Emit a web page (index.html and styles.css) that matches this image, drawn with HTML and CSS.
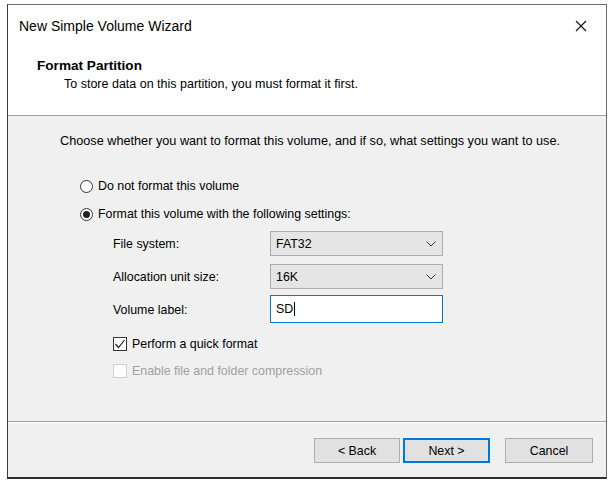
FILE: index.html
```html
<!DOCTYPE html>
<html lang="en">

<head>
  <meta charset="UTF-8">
  <title>New Simple Volume Wizard</title>
  <link rel="stylesheet" href="styles.css">
</head>

<body>
  <div class="window">
    <div class="titlebar">
      <span class="title">New Simple Volume Wizard</span>
      <span class="close">
        <svg width="12" height="12" viewBox="0 0 12 12">
          <path d="M1 1 L11 11 M11 1 L1 11" stroke="#111" stroke-width="1.1" fill="none" />
        </svg>
      </span>
    </div>
    <div class="header">
      <div class="heading">Format Partition</div>
      <div class="subheading">To store data on this partition, you must format it first.</div>
    </div>
    <div class="content">
      <p class="intro">Choose whether you want to format this volume, and if so, what settings you want to use.</p>
      <div class="option first"><span class="radio"></span>Do not format this volume</div>
      <div class="option"><span class="radio checked"></span>Format this volume with the following settings:</div>

      <div class="settings">
        <label>File system:</label>
        <div class="select">FAT32
          <svg class="chev" width="10" height="6" viewBox="0 0 10 6"><path d="M0.5 0.5 L5 5 L9.5 0.5" stroke="#333" fill="none" /></svg>
        </div>
        <label>Allocation unit size:</label>
        <div class="select">16K
          <svg class="chev" width="10" height="6" viewBox="0 0 10 6"><path d="M0.5 0.5 L5 5 L9.5 0.5" stroke="#333" fill="none" /></svg>
        </div>
        <label>Volume label:</label>
        <div class="textbox">SD<span class="caret"></span></div>
      </div>

      <div class="check">
        <span class="box">
          <svg width="12" height="12" viewBox="0 0 12 12"><path d="M1.5 6 L4.5 9.5 L10.5 2" stroke="#222" stroke-width="1.2" fill="none" /></svg>
        </span>Perform a quick format
      </div>
      <div class="check disabled"><span class="box"></span>Enable file and folder compression</div>
    </div>
    <div class="footer">
      <button class="back">&lt; Back</button>
      <button class="default">Next &gt;</button>
      <button class="cancel">Cancel</button>
    </div>
  </div>
</body>

</html>
```

FILE: styles.css
```css
body {
  margin: 0;
  padding: 4px 0 0 7px;
  background-color: #fff;
  font-family: "Liberation Sans", Arial, sans-serif;
  font-size: 12.4px;
  color: #000;
}

.window {
  width: 598px;
  height: 472px;
  border: 1px solid #6b6b6b;
  border-left-color: #3a3a3a;
  border-bottom: 2px solid #2e2e2e;
  display: flex;
  flex-direction: column;
  background-color: #f0f0f0;
}

.titlebar {
  height: 42px;
  background-color: #fff;
  display: flex;
  align-items: center;
  justify-content: space-between;
  padding: 0 19px 0 11px;
}

.title {
  font-size: 14px;
}

.close {
  display: flex;
}

.header {
  background-color: #fff;
  height: 57px;
  padding: 11px 0 0 29px;
  border-bottom: 1px solid #a0a0a0;
}

.heading {
  font-weight: bold;
  font-size: 13.6px;
  line-height: 16px;
}

.subheading {
  font-size: 12.5px;
  line-height: 16px;
  margin-top: 2px;
  padding-left: 27px;
}

.content {
  flex: 1;
  padding: 17px 0 0 52px;
}

.intro {
  margin: 0;
  line-height: 16px;
  font-size: 12.7px;
}

.option {
  display: flex;
  align-items: center;
  height: 16px;
  margin-top: 12px;
  padding-left: 20px;
}

.option.first {
  margin-top: 29px;
}

.radio {
  width: 11px;
  height: 11px;
  border: 1px solid #333;
  border-radius: 50%;
  background-color: #fff;
  margin-right: 5px;
  display: flex;
  align-items: center;
  justify-content: center;
}

.radio.checked::after {
  content: "";
  width: 7px;
  height: 7px;
  border-radius: 50%;
  background-color: #222;
}

.settings {
  display: grid;
  grid-template-columns: 157px 173px;
  row-gap: 8px;
  margin: 9px 0 0 53px;
  align-items: center;
}

.select {
  height: 23px;
  border: 1px solid #adadad;
  background-color: #e5e5e5;
  display: flex;
  align-items: center;
  justify-content: space-between;
  padding: 0 6px 0 5px;
}

.chev {
  display: block;
}

.textbox {
  height: 26px;
  border: 1px solid #0078d7;
  background-color: #fff;
  display: flex;
  align-items: center;
  padding-left: 5px;
  margin-top: -2px;
}

.caret {
  width: 1px;
  height: 14px;
  background-color: #000;
  margin-left: 1px;
}

.check {
  display: flex;
  align-items: center;
  height: 16px;
  margin: 13px 0 0 53px;
}

.check + .check {
  margin-top: 11px;
}

.box {
  width: 12px;
  height: 12px;
  border: 1px solid #333;
  background-color: #fff;
  margin-right: 5px;
  display: flex;
  align-items: center;
  justify-content: center;
}

.check.disabled {
  color: #a0a0a0;
}

.check.disabled .box {
  border-color: #cfcfcf;
}

.footer {
  height: 56px;
  border-top: 1px solid #a0a0a0;
  box-shadow: inset 0 1px #fff;
  display: flex;
  justify-content: flex-end;
  padding: 16px 13px 0 0;
  box-sizing: border-box;
  align-items: flex-start;
}

.footer button {
  width: 87px;
  height: 25px;
  font-family: inherit;
  font-size: 12.4px;
  background-color: #e1e1e1;
  border: 1px solid #adadad;
  padding: 0;
  margin-left: 3px;
}

.footer .back {
  width: 86px;
}

.footer .default {
  border: 2px solid #0078d7;
}

.footer .cancel {
  width: 88px;
  margin-left: 15px;
}
```
